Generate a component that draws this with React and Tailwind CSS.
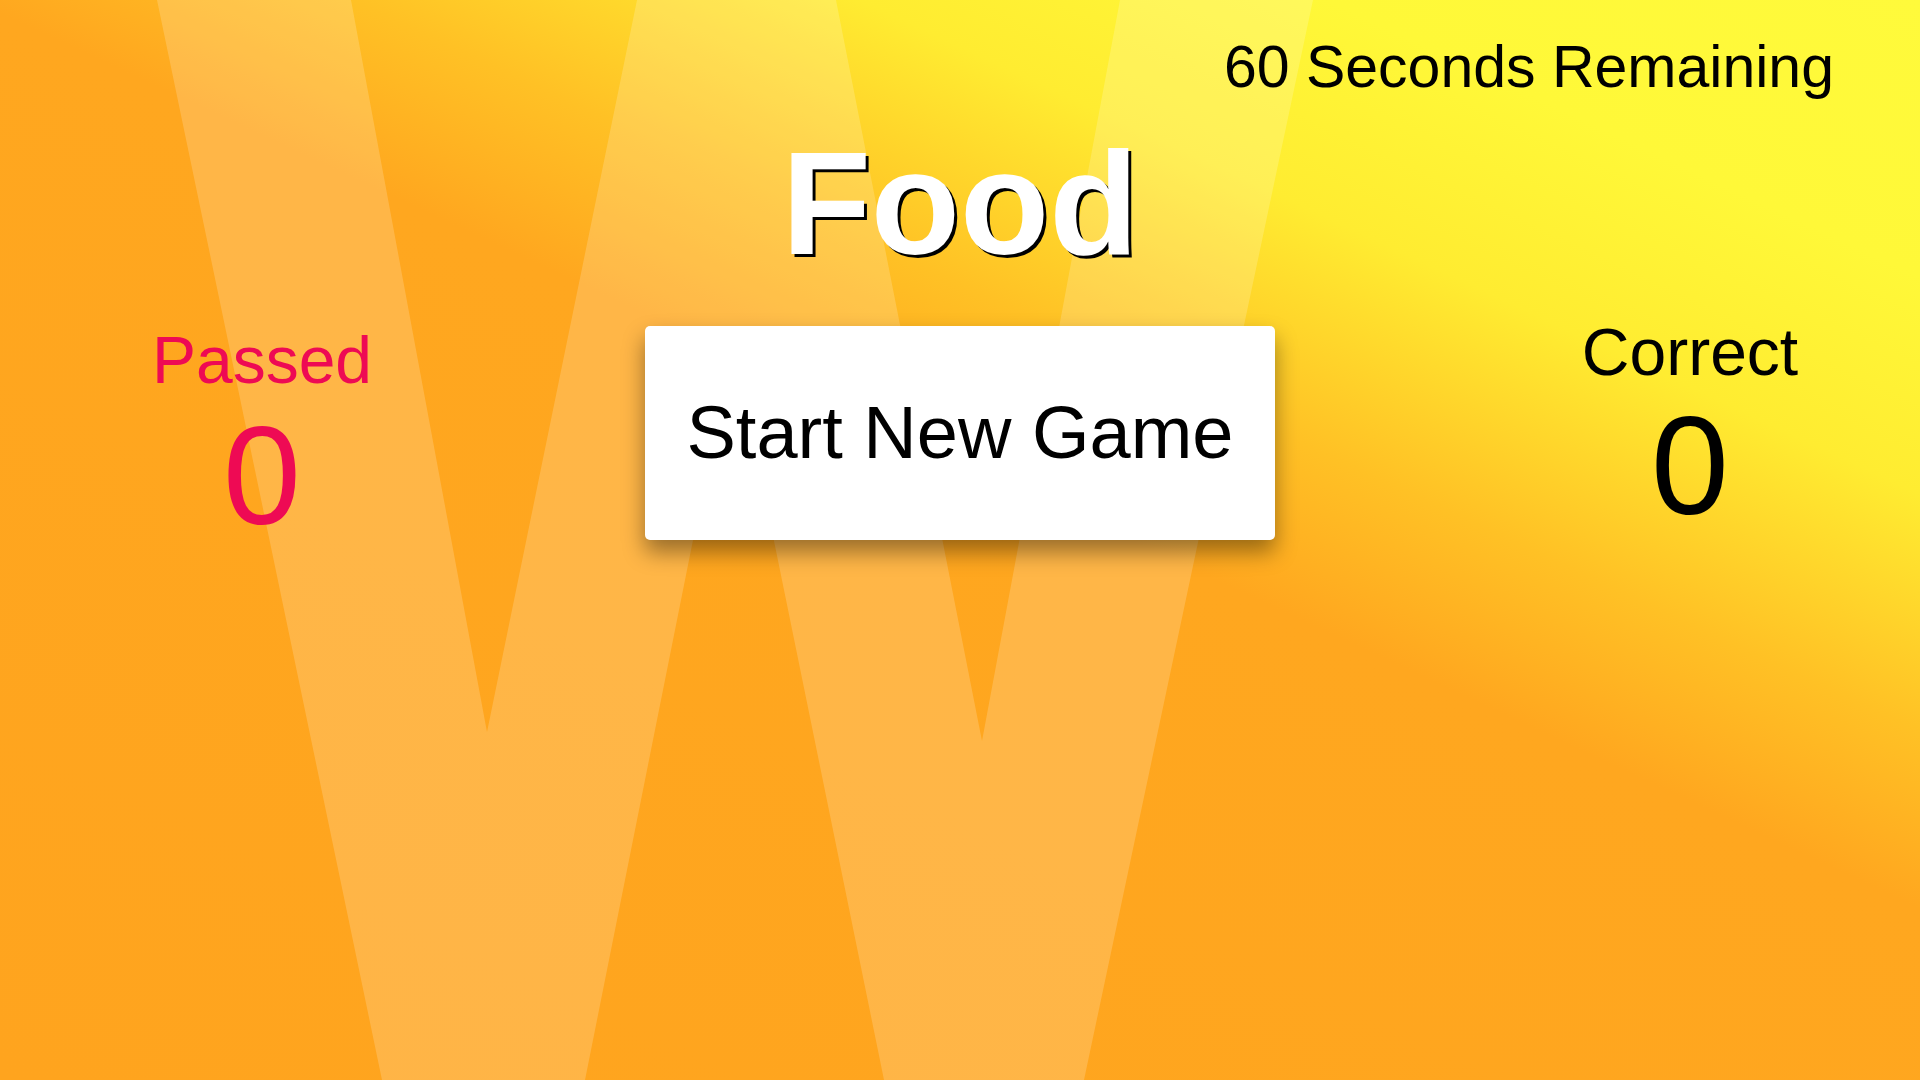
export default function App() {
  return (
    <div
      className="relative w-[1920px] h-[1080px] overflow-hidden bg-[linear-gradient(25deg,#FFA41E_0%,#FFA71F_54%,#FFC125_63%,#FFEC31_75%,#FFF838_86%,#FFFA3B_100%)]"
      style={{ fontFamily: '"Liberation Sans", Arial, sans-serif' }}
    >
      <svg
        className="absolute inset-0 w-full h-full"
        viewBox="0 0 1920 1080"
        preserveAspectRatio="none"
      >
        <polygon
          points="157,0 351,0 487,732 637,0 836,0 982,741 1120,0 1313,0 1084,1080 884,1080 733,340 585,1080 382,1080"
          fill="rgba(255,255,255,0.18)"
        />
      </svg>

      <div className="relative flex flex-col">
        <div className="flex justify-end pr-[86px] pt-[38px]">
          <div className="text-[59px] leading-none text-black">60 Seconds Remaining</div>
        </div>

        <div className="flex justify-center mt-[34px]">
          <div className="text-[146px] leading-none font-bold text-white [text-shadow:3px_3px_0_#000]">
            Food
          </div>
        </div>

        <div className="flex items-start mt-[42px]">
          <div className="w-[524px] mt-[8px] flex flex-col items-center text-[#EE0A54]">
            <div className="text-[66px] leading-none">Passed</div>
            <div className="text-[140px] leading-none mt-[13px]">0</div>
          </div>

          <button className="ml-[121px] mt-[7px] w-[630px] h-[214px] bg-white rounded-[5px] shadow-[0_12px_22px_rgba(0,0,0,0.4)] flex items-center justify-center">
            <span className="text-[74px] leading-none text-black">Start New Game</span>
          </button>

          <div className="ml-[215px] w-[400px] flex flex-col items-center text-black">
            <div className="text-[66px] leading-none">Correct</div>
            <div className="text-[140px] leading-none mt-[11px]">0</div>
          </div>
        </div>
      </div>
    </div>
  );
}
